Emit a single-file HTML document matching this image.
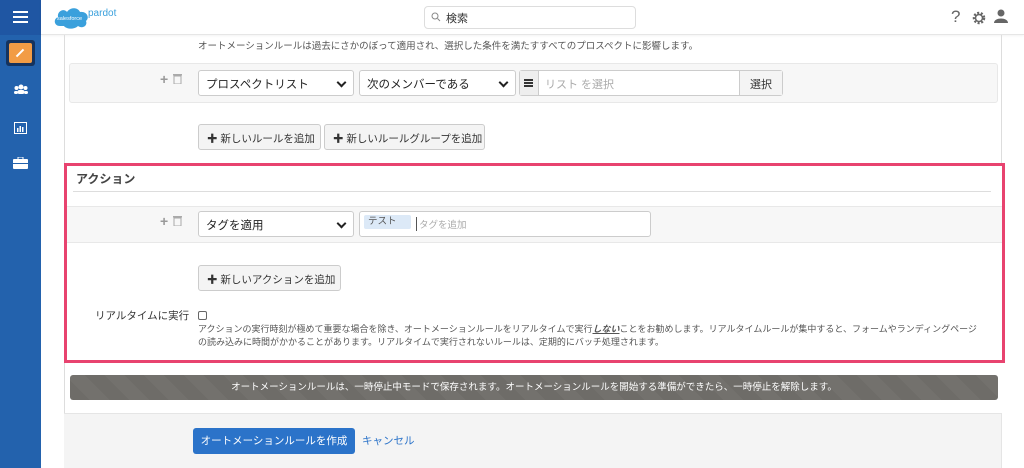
<!DOCTYPE html>
<html><head><meta charset="utf-8"><style>
*{box-sizing:border-box;margin:0;padding:0}
body{width:1024px;height:468px;overflow:hidden;background:#fff;font-family:"Liberation Sans","Noto Sans CJK JP",sans-serif;color:#333;font-size:11px;position:relative}
.abs{position:absolute;white-space:nowrap}
.side{left:0;top:0;width:41px;height:468px;background:#2362ad}
.hdr{left:41px;top:0;right:0;height:35px;background:#fff;border-bottom:1px solid #e6e6e6;box-shadow:0 1px 2px rgba(0,0,0,.05)}
.sel{background:#fff;border:1px solid #ccc;border-radius:3px;height:26px;font-size:11.5px;padding:5px 7px;color:#222}
.sel:after{content:"";position:absolute;right:8px;top:8px;width:5px;height:5px;border-right:2px solid #222;border-bottom:2px solid #222;transform:rotate(45deg)}
.btn{background:#f4f4f4;border:1px solid #ccc;border-radius:3px;height:26px;font-size:10.5px;padding:6px 8px;color:#333;text-align:center}
</style></head><body>
<div class="abs side"></div>
<div class="abs" style="left:0;top:0;width:41px;height:35px;background:#1f56a3"></div>
<div class="abs" style="left:13px;top:11px;width:15px;height:2px;background:#fff;box-shadow:0 5px 0 #fff,0 10px 0 #fff"></div>
<div class="abs" style="left:6px;top:40px;width:29px;height:26px;background:#15335e;border-radius:3px"></div>
<div class="abs" style="left:9px;top:43px;width:23px;height:20px;background:#f29c45;border-radius:2px"></div>
<div class="abs" style="left:15px;top:52px;width:10px;height:2px;background:#fff;transform:rotate(-45deg)"></div>
<div class="abs" style="left:14px;top:84px;width:13px;height:10px">
<svg width="14" height="10"><circle cx="7" cy="3" r="2.5" fill="#fff"/><circle cx="2.5" cy="4" r="2" fill="#fff"/><circle cx="11.5" cy="4" r="2" fill="#fff"/><rect x="3.5" y="6" width="7" height="4" rx="2" fill="#fff"/><rect x="0" y="7" width="4" height="3" rx="1.5" fill="#fff"/><rect x="10" y="7" width="4" height="3" rx="1.5" fill="#fff"/></svg></div>
<svg class="abs" style="left:14px;top:122px" width="13" height="12"><rect x="0.5" y="0.5" width="12" height="11" fill="none" stroke="#fff"/><rect x="3" y="6" width="1.5" height="4" fill="#fff"/><rect x="5.5" y="4" width="1.5" height="6" fill="#fff"/><rect x="8" y="5" width="1.5" height="5" fill="#fff"/></svg>
<svg class="abs" style="left:13px;top:157px" width="15" height="12"><rect x="0" y="2" width="15" height="10" rx="1" fill="#fff"/><rect x="5" y="0" width="5" height="3" fill="none" stroke="#fff"/><rect x="0" y="6" width="15" height="1" fill="#2362ad"/></svg>

<div class="abs hdr"></div>
<svg class="abs" style="left:52px;top:4px" width="38" height="26"><path d="M8 22 C2 22 1 15 6 13 C5 7 12 4 15 8 C18 3 26 3 28 8 C35 7 38 14 34 17 C36 22 30 25 26 22 C22 26 14 25 12 22 Z" fill="#3aa0dc"/><text x="5" y="16" font-size="5.5" fill="#fff" font-family="Liberation Sans">salesforce</text></svg>
<div class="abs" style="left:88px;top:8px;font-size:10px;color:#3aa0dc">pardot</div>
<div class="abs" style="left:424px;top:6px;width:212px;height:23px;border:1px solid #ddd;border-radius:4px"></div>
<svg class="abs" style="left:431px;top:12px" width="10" height="10"><circle cx="4" cy="4" r="3" stroke="#888" fill="none"/><path d="M6.5 6.5L9 9" stroke="#888"/></svg>
<div class="abs" style="left:446px;top:10px;font-size:11px;color:#333">検索</div>
<div class="abs" style="left:951px;top:7px;font-size:17px;color:#666">?</div>
<svg class="abs" style="left:972px;top:11px" width="14" height="14"><circle cx="7" cy="7" r="5" fill="none" stroke="#666" stroke-width="2.5" stroke-dasharray="2 1.6"/><circle cx="7" cy="7" r="3.5" fill="none" stroke="#666" stroke-width="1.5"/></svg>
<svg class="abs" style="left:994px;top:9px" width="14" height="14"><circle cx="7" cy="4" r="3.5" fill="#666"/><path d="M0 14 C0 8 14 8 14 14Z" fill="#666"/></svg>

<div class="abs" style="left:64px;top:35px;width:1px;height:433px;background:#ddd"></div>
<div class="abs" style="left:1001px;top:35px;width:1px;height:130px;background:#ddd"></div>
<div class="abs" style="left:198px;top:38px;font-size:9.5px;color:#555">オートメーションルールは過去にさかのぼって適用され、選択した条件を満たすすべてのプロスペクトに影響します。</div>
<div class="abs" style="left:69px;top:63px;width:929px;height:40px;background:#f7f7f7;border:1px solid #e8e8e8;border-radius:3px"></div>
<div class="abs" style="left:160px;top:71px;font-size:14px;color:#999;font-weight:bold">+</div>
<svg class="abs" style="left:173px;top:74px" width="9" height="10"><rect x="1" y="2" width="7" height="8" fill="none" stroke="#aaa"/><rect x="0" y="0" width="9" height="1.5" fill="#aaa"/></svg>
<div class="abs sel" style="left:198px;top:70px;width:156px">プロスペクトリスト</div>
<div class="abs sel" style="left:359px;top:70px;width:157px">次のメンバーである</div>
<div class="abs" style="left:519px;top:70px;width:264px;height:26px;border:1px solid #ccc;border-radius:3px;background:#fff"></div>
<div class="abs" style="left:520px;top:71px;width:19px;height:24px;background:#eee;border-right:1px solid #ccc"></div>
<div class="abs" style="left:524px;top:79px;width:9px;height:2px;background:#333;box-shadow:0 3px 0 #333,0 6px 0 #333"></div>
<div class="abs" style="left:545px;top:76px;font-size:11px;color:#aaa">リスト を選択</div>
<div class="abs" style="left:739px;top:71px;width:43px;height:24px;background:#f4f4f4;border-left:1px solid #ccc;font-size:11px;padding:5px 0;text-align:center">選択</div>
<div class="abs btn" style="left:198px;top:124px;width:123px">✚ 新しいルールを追加</div>
<div class="abs btn" style="left:324px;top:124px;width:161px">✚ 新しいルールグループを追加</div>

<div class="abs" style="left:64px;top:163px;width:941px;height:200px;border:3px solid #e8436f"></div>
<div class="abs" style="left:76px;top:170px;font-size:12px;font-weight:bold;color:#444">アクション</div>
<div class="abs" style="left:73px;top:191px;width:918px;height:1px;background:#ddd"></div>
<div class="abs" style="left:67px;top:206px;width:935px;height:37px;background:#f7f7f7;border-top:1px solid #e8e8e8;border-bottom:1px solid #e8e8e8"></div>
<div class="abs" style="left:160px;top:213px;font-size:14px;color:#999;font-weight:bold">+</div>
<svg class="abs" style="left:173px;top:216px" width="9" height="10"><rect x="1" y="2" width="7" height="8" fill="none" stroke="#aaa"/><rect x="0" y="0" width="9" height="1.5" fill="#aaa"/></svg>
<div class="abs sel" style="left:198px;top:211px;width:156px">タグを適用</div>
<div class="abs" style="left:359px;top:211px;width:292px;height:26px;background:#fff;border:1px solid #ccc;border-radius:3px"></div>
<div class="abs" style="left:364px;top:215px;width:47px;height:14px;background:#dce9f7;border-radius:2px;font-size:9.5px;color:#555;padding:0 4px;line-height:13px">テスト</div>
<div class="abs" style="left:416px;top:217px;width:1px;height:14px;background:#555"></div>
<div class="abs" style="left:419px;top:217px;font-size:9.5px;color:#aaa">タグを追加</div>
<div class="abs btn" style="left:198px;top:265px;width:143px">✚ 新しいアクションを追加</div>
<div class="abs" style="left:95px;top:308px;font-size:10.5px;color:#333">リアルタイムに実行</div>
<div class="abs" style="left:198px;top:311px;width:9px;height:9px;border:1px solid #666;border-radius:2px"></div>
<div class="abs" style="left:198px;top:323px;font-size:9px;color:#555;line-height:13px;width:800px">アクションの実行時刻が極めて重要な場合を除き、オートメーションルールをリアルタイムで実行<i style="text-decoration:underline;font-weight:bold">しない</i>ことをお勧めします。リアルタイムルールが集中すると、フォームやランディングページ<br>の読み込みに時間がかかることがあります。リアルタイムで実行されないルールは、定期的にバッチ処理されます。</div>

<div class="abs" style="left:70px;top:375px;width:928px;height:25px;border-radius:3px;background:repeating-linear-gradient(45deg,#6e6c68 0 14px,#73716d 14px 28px);color:#fff;font-size:9.5px;text-align:center;line-height:25px">オートメーションルールは、一時停止中モードで保存されます。オートメーションルールを開始する準備ができたら、一時停止を解除します。</div>
<div class="abs" style="left:64px;top:413px;width:938px;height:55px;background:#f4f4f4;border-top:1px solid #e5e5e5;border-right:1px solid #e5e5e5"></div>
<div class="abs" style="left:193px;top:428px;width:162px;height:26px;background:#2b73c9;border-radius:3px;color:#fff;font-size:10.5px;text-align:center;line-height:26px">オートメーションルールを作成</div>
<div class="abs" style="left:362px;top:433px;font-size:10.5px;color:#2b73c9">キャンセル</div>
</body></html>
